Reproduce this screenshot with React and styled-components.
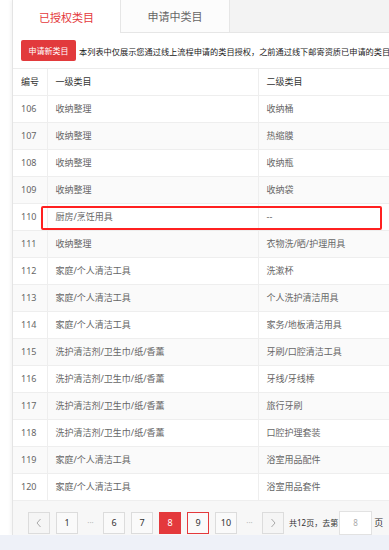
import React from "react";
import styled, { createGlobalStyle, css } from "styled-components";

const GlobalStyle = createGlobalStyle`
  html, body { margin: 0; padding: 0; }
  body {
    background: #eef1f8;
    font-family: "Noto Sans", "Noto Sans CJK SC", sans-serif;
    color: #333;
  }
  * { box-sizing: border-box; }
`;

const Page = styled.div`
  width: 389px;
  height: 550px;
  display: flex;
  flex-direction: column;
  overflow: hidden;
`;

const MainRow = styled.div`
  display: flex;
  height: 535px;
`;

const Gutter = styled.div`
  width: 12px;
  flex: none;
  background: #fff;
`;

const Content = styled.div`
  flex: 1;
  min-width: 0;
  overflow: hidden;
  display: flex;
  flex-direction: column;
  background: #fff;
  border-left: 1px solid #e4e4e4;
  box-shadow: -2px 0 3px rgba(0, 0, 0, 0.04);
`;

const BottomStrip = styled.div`
  flex: 1;
  background: #eef1f8;
`;

const TabBar = styled.div`
  display: flex;
  height: 33px;
  flex: none;
  background: #f3f3f3;
`;

const Tab = styled.div`
  width: ${(p) => p.$w}px;
  display: flex;
  align-items: center;
  justify-content: center;
  font-size: 11px;
  border-right: 1px solid #e6e6e6;
  ${(p) =>
    p.$active
      ? css`
          background: #fff;
          color: #e4393c;
        `
      : css`
          background: #fcfcfc;
          color: #666;
          border-bottom: 1px solid #e6e6e6;
        `}
`;

const TabFill = styled.div`
  flex: 1;
  border-bottom: 1px solid #e6e6e6;
`;

const Toolbar = styled.div`
  height: 36px;
  flex: none;
  display: flex;
  align-items: center;
  padding-left: 8px;
  gap: 3px;
  border-bottom: 1px solid #ececec;
  white-space: nowrap;
  overflow: hidden;
`;

const RedButton = styled.button`
  width: 55px;
  height: 21px;
  flex: none;
  border: none;
  border-radius: 2px;
  background: #e23a3c;
  color: #fff;
  font-family: inherit;
  font-size: 8px;
  padding: 0;
`;

const Notice = styled.span`
  font-size: 8.2px;
  color: #222;
`;

const TableWrap = styled.div`
  position: relative;
  flex: none;
`;

const Table = styled.table`
  width: 560px;
  border-collapse: collapse;
  table-layout: fixed;
  font-size: 9px;
`;

const Th = styled.th`
  height: 26px;
  text-align: left;
  font-weight: normal;
  color: #333;
  padding: 0 0 0 8px;
  white-space: nowrap;
  overflow: hidden;
  border-right: 1px solid #eeeeee;
  border-bottom: 1px solid #eeeeee;
`;

const Tr = styled.tr`
  background: ${(p) => (p.$striped ? "#fafafa" : "#fff")};
`;

const Td = styled.td`
  height: 27px;
  padding: 0 0 0 8px;
  color: #666;
  white-space: nowrap;
  overflow: hidden;
  border-right: 1px solid #eeeeee;
  border-bottom: 1px solid #eeeeee;
`;

const Highlight = styled.div`
  position: absolute;
  left: 28px;
  top: 137px;
  width: 341px;
  height: 24px;
  border: 2px solid #ff2020;
  border-radius: 2px;
  pointer-events: none;
`;

const Pager = styled.div`
  flex: 1;
  background: #f7f7f7;
  display: flex;
  align-items: flex-start;
  padding: 11px 0 0 15px;
  gap: 6px;
  font-size: 9px;
  white-space: nowrap;
`;

const PageBtn = styled.div`
  width: 22px;
  height: 22px;
  flex: none;
  display: flex;
  align-items: center;
  justify-content: center;
  font-size: 9px;
  border: 1px solid ${(p) => (p.$active || p.$hover ? "#e4393c" : "#dcdcdc")};
  background: ${(p) => (p.$active ? "#e4393c" : p.$muted ? "#f5f5f5" : "#fafafa")};
  color: ${(p) => (p.$active ? "#fff" : p.$muted ? "#aaa" : "#333")};
`;

const Ellipsis = styled.div`
  width: 13px;
  height: 22px;
  flex: none;
  display: flex;
  align-items: center;
  justify-content: center;
  color: #bbb;
  font-size: 8px;
`;

const PagerText = styled.div`
  height: 22px;
  display: flex;
  align-items: center;
  color: #333;
  font-size: 8px;
  margin-left: -1px;
`;

const PageInput = styled.div`
  width: 33px;
  height: 24px;
  flex: none;
  margin: -1px 0 0 -5px;
  background: #fff;
  border: 1px solid #e2e2e2;
  display: flex;
  align-items: center;
  justify-content: center;
  color: #aaa;
  font-size: 8px;
`;

const PagerUnit = styled.div`
  height: 22px;
  display: flex;
  align-items: center;
  color: #333;
  font-size: 9px;
  margin-left: -4px;
`;

const Chevron = ({ dir }) => (
  <svg width="8" height="10" viewBox="0 0 8 10">
    <path
      d={dir === "left" ? "M5.5 1 L2 5 L5.5 9" : "M2.5 1 L6 5 L2.5 9"}
      fill="none"
      stroke="#aaa"
      strokeWidth="1"
    />
  </svg>
);

const rows = [
  [106, "收纳整理", "收纳桶"],
  [107, "收纳整理", "热缩膜"],
  [108, "收纳整理", "收纳瓶"],
  [109, "收纳整理", "收纳袋"],
  [110, "厨房/烹饪用具", "--"],
  [111, "收纳整理", "衣物洗/晒/护理用具"],
  [112, "家庭/个人清洁工具", "洗漱杯"],
  [113, "家庭/个人清洁工具", "个人洗护清洁用具"],
  [114, "家庭/个人清洁工具", "家务/地板清洁用具"],
  [115, "洗护清洁剂/卫生巾/纸/香薰", "牙刷/口腔清洁工具"],
  [116, "洗护清洁剂/卫生巾/纸/香薰", "牙线/牙线棒"],
  [117, "洗护清洁剂/卫生巾/纸/香薰", "旅行牙刷"],
  [118, "洗护清洁剂/卫生巾/纸/香薰", "口腔护理套装"],
  [119, "家庭/个人清洁工具", "浴室用品配件"],
  [120, "家庭/个人清洁工具", "浴室用品套件"],
];

export default function App() {
  return (
    <>
      <GlobalStyle />
      <Page>
        <MainRow>
          <Gutter />
          <Content>
            <TabBar>
              <Tab $w={108} $active>
                已授权类目
              </Tab>
              <Tab $w={109}>申请中类目</Tab>
              <TabFill />
            </TabBar>
            <Toolbar>
              <RedButton>申请新类目</RedButton>
              <Notice>
                本列表中仅展示您通过线上流程申请的类目授权，之前通过线下邮寄资质已申请的类目授权不在此列表中展示
              </Notice>
            </Toolbar>
            <TableWrap>
              <Table>
                <colgroup>
                  <col style={{ width: 34 }} />
                  <col style={{ width: 211 }} />
                  <col />
                </colgroup>
                <thead>
                  <tr>
                    <Th>编号</Th>
                    <Th>一级类目</Th>
                    <Th>二级类目</Th>
                  </tr>
                </thead>
                <tbody>
                  {rows.map(([id, a, b]) => (
                    <Tr key={id} $striped={id % 2 === 1}>
                      <Td>{id}</Td>
                      <Td>{a}</Td>
                      <Td>{b}</Td>
                    </Tr>
                  ))}
                </tbody>
              </Table>
              <Highlight />
            </TableWrap>
            <Pager>
              <PageBtn $muted>
                <Chevron dir="left" />
              </PageBtn>
              <PageBtn>1</PageBtn>
              <Ellipsis>···</Ellipsis>
              <PageBtn>6</PageBtn>
              <PageBtn>7</PageBtn>
              <PageBtn $active>8</PageBtn>
              <PageBtn $hover>9</PageBtn>
              <PageBtn>10</PageBtn>
              <Ellipsis>···</Ellipsis>
              <PageBtn $muted>
                <Chevron dir="right" />
              </PageBtn>
              <PagerText>共12页，去第</PagerText>
              <PageInput>8</PageInput>
              <PagerUnit>页</PagerUnit>
            </Pager>
          </Content>
        </MainRow>
        <BottomStrip />
      </Page>
    </>
  );
}
